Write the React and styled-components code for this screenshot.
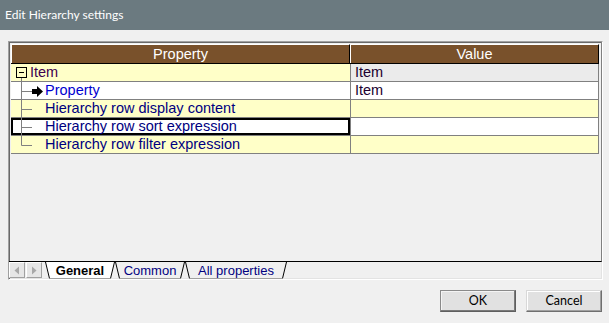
import React from "react";
import styled, { createGlobalStyle } from "styled-components";

const Global = createGlobalStyle`
  html, body { margin: 0; padding: 0; background: #f0f0f0; }
  body { width: 609px; height: 323px; overflow: hidden; }
  #root { width: 609px; height: 323px; }
`;

const Window = styled.div`
  width: 609px;
  height: 323px;
  display: flex;
  flex-direction: column;
  background: #f0f0f0;
  font-family: Lato, "Noto Sans", sans-serif;
`;

const TitleBar = styled.div`
  height: 30px;
  flex: none;
  display: flex;
  align-items: center;
  padding-left: 5px;
  background: #6b7a80;
  color: #ffffff;
  font-family: Lato, "Noto Sans", sans-serif;
  font-size: 12px;
  box-sizing: border-box;
  padding-bottom: 1px;
`;

const Content = styled.div`
  padding: 11px 6px 0 8px;
  display: flex;
  flex-direction: column;
`;

const Frame = styled.div`
  width: 595px;
  height: 239px;
  box-sizing: border-box;
  border: 1px solid;
  border-color: #a0a0a0 #ffffff #ffffff #a0a0a0;
  box-shadow: inset 1px 1px 0 #696969, inset -1px -1px 0 #e3e3e3;
  display: flex;
  flex-direction: column;
`;

const Sheet = styled.div`
  height: 220px;
  box-sizing: border-box;
  padding: 2px 2px 0 2px;
  border-right: 1px solid #808080;
  border-bottom: 1px solid #000000;
  display: flex;
  flex-direction: column;
  font-family: "Liberation Sans", Arial, sans-serif;
  font-size: 14.5px;
`;

const HeaderRow = styled.div`
  display: grid;
  grid-template-columns: 339px 249px;
  height: 19px;
  border-bottom: 1px solid #000;
  box-sizing: content-box;
`;

const HeaderCell = styled.div`
  box-sizing: border-box;
  height: 19px;
  background: #79512b;
  color: #ffffff;
  border-top: 1px solid #ffffff;
  border-left: 1px solid #ffffff;
  border-right: 1px solid #000000;
  display: flex;
  align-items: center;
  justify-content: center;
  line-height: 17px;
`;

const Row = styled.div`
  display: grid;
  grid-template-columns: 340px 248px;
  height: 18px;
`;

const Cell = styled.div`
  box-sizing: border-box;
  height: 18px;
  border-right: 1px solid #808080;
  border-bottom: 1px solid #808080;
  background: ${(p) => p.$bg};
  color: ${(p) => p.$color || "#000"};
  display: flex;
  align-items: center;
  padding-left: ${(p) => p.$pad || 0}px;
  line-height: 17px;
  white-space: nowrap;
  box-shadow: ${(p) => (p.$selected ? "inset 0 0 0 2px #000" : "none")};
`;

const Gutter = styled.svg`
  flex: none;
  display: block;
`;

const Label = styled.span`
  display: block;
`;

const TabBar = styled.div`
  height: 17px;
  display: flex;
  align-items: stretch;
  font-family: "Liberation Sans", Arial, sans-serif;
  font-size: 13px;
`;

const ScrollBtns = styled.div`
  display: flex;
  width: 35px;
  flex: none;
`;

const ScrollBtn = styled.div`
  width: 16px;
  height: 16px;
  box-sizing: border-box;
  border: 1px solid;
  border-color: #ffffff #a0a0a0 #a0a0a0 #ffffff;
  background: #e6e6e6;
  display: flex;
  align-items: center;
  justify-content: center;
  margin-right: 1px;
`;

const Tabs = styled.div`
  display: flex;
  margin-left: 1px;
`;

const Tab = styled.div`
  position: relative;
  width: ${(p) => p.$w}px;
  height: 17px;
  display: flex;
  align-items: center;
  justify-content: center;
  color: ${(p) => (p.$active ? "#000" : "#000080")};
  font-weight: ${(p) => (p.$active ? 700 : 400)};
  line-height: 15px;
`;

const TabShape = styled.svg`
  position: absolute;
  left: 0;
  top: 0;
`;

const TabLabel = styled.span`
  position: relative;
  margin-top: -1px;
`;

const Footer = styled.div`
  display: flex;
  justify-content: flex-end;
  gap: 10px;
  padding: 10px 1px 0 0;
`;

const Button = styled.button`
  width: 76px;
  height: 22px;
  box-sizing: border-box;
  padding: 0;
  margin: 0;
  font-family: Lato, "Noto Sans", sans-serif;
  font-size: 12.5px;
  color: #000;
  background: #e1e1e1;
  border: 1px solid;
  border-color: ${(p) =>
    p.$default ? "#8a8a8a #5f5f5f #5f5f5f #8a8a8a" : "#d8d8d8 #6f6f6f #6f6f6f #d8d8d8"};
  box-shadow: ${(p) =>
    p.$default
      ? "inset -1px -1px 0 #7a7a7a, inset 1px 1px 0 #f4f4f4"
      : "inset -1px -1px 0 #a0a0a0, inset 1px 1px 0 #ffffff"};
  line-height: 18px;
`;

const YELLOW = "#ffffc8";

function TreeItem() {
  return (
    <Gutter width="19" height="17" viewBox="0 0 19 17">
      <rect x="5.5" y="3.5" width="10" height="10" fill="none" stroke="#000" />
      <line x1="8" y1="8.5" x2="13" y2="8.5" stroke="#000" />
      <line x1="10.5" y1="14" x2="10.5" y2="17" stroke="#808080" />
    </Gutter>
  );
}

function TreeBranch({ last, arrow }) {
  return (
    <Gutter width="34" height="17" viewBox="0 0 34 17">
      <line x1="10.5" y1="0" x2="10.5" y2={last ? 9.5 : 17} stroke="#808080" />
      <line x1="10.5" y1="9.5" x2="21" y2="9.5" stroke="#808080" />
      {arrow && (
        <path d="M21 7 H26 V4 L32 9.5 L26 15 V12 H21 Z" fill="#000" />
      )}
    </Gutter>
  );
}

function Tri({ dir }) {
  return (
    <svg width="8" height="9" viewBox="0 0 8 9">
      {dir === "left" ? (
        <path d="M6 0.5 L1.5 4.5 L6 8.5 Z" fill="#a8a8a8" />
      ) : (
        <path d="M2 0.5 L6.5 4.5 L2 8.5 Z" fill="#a8a8a8" />
      )}
    </svg>
  );
}

function SheetTab({ w, active, children }) {
  return (
    <Tab $w={w} $active={active}>
      <TabShape width={w} height="17" viewBox={`0 0 ${w} 17`}>
        <polygon
          points={`0,0 ${w},0 ${w - 4},16.5 4,16.5`}
          fill={active ? "#ffffff" : "#f0f0f0"}
        />
        <line x1="0.5" y1="0" x2="4.5" y2="16.5" stroke="#000" />
        <line x1={w - 0.5} y1="0" x2={w - 4.5} y2="16.5" stroke="#000" />
        <line x1="4.5" y1="16.5" x2={w - 4.5} y2="16.5" stroke="#a0a0a0" />
      </TabShape>
      <TabLabel>{children}</TabLabel>
    </Tab>
  );
}

export default function App() {
  return (
    <>
      <Global />
      <Window>
        <TitleBar>Edit Hierarchy settings</TitleBar>
        <Content>
          <Frame>
            <Sheet>
              <HeaderRow>
                <HeaderCell>Property</HeaderCell>
                <HeaderCell>Value</HeaderCell>
              </HeaderRow>
              <Row>
                <Cell $bg={YELLOW} $color="#400050">
                  <TreeItem />
                  <Label>Item</Label>
                </Cell>
                <Cell $bg="#ebebeb" $color="#200030" $pad={4}>
                  Item
                </Cell>
              </Row>
              <Row>
                <Cell $bg="#ffffff" $color="#0000d0">
                  <TreeBranch arrow />
                  <Label>Property</Label>
                </Cell>
                <Cell $bg="#ffffff" $color="#200030" $pad={4}>
                  Item
                </Cell>
              </Row>
              <Row>
                <Cell $bg={YELLOW} $color="#000080">
                  <TreeBranch />
                  <Label>Hierarchy row display content</Label>
                </Cell>
                <Cell $bg={YELLOW} />
              </Row>
              <Row>
                <Cell $bg="#ffffff" $color="#000080" $selected>
                  <TreeBranch />
                  <Label>Hierarchy row sort expression</Label>
                </Cell>
                <Cell $bg="#ffffff" />
              </Row>
              <Row>
                <Cell $bg={YELLOW} $color="#000080">
                  <TreeBranch last />
                  <Label>Hierarchy row filter expression</Label>
                </Cell>
                <Cell $bg={YELLOW} />
              </Row>
            </Sheet>
            <TabBar>
              <ScrollBtns>
                <ScrollBtn>
                  <Tri dir="left" />
                </ScrollBtn>
                <ScrollBtn>
                  <Tri dir="right" />
                </ScrollBtn>
              </ScrollBtns>
              <Tabs>
                <SheetTab w={70} active>
                  General
                </SheetTab>
                <SheetTab w={70}>Common</SheetTab>
                <SheetTab w={102}>All properties</SheetTab>
              </Tabs>
            </TabBar>
          </Frame>
          <Footer>
            <Button $default>OK</Button>
            <Button>Cancel</Button>
          </Footer>
        </Content>
      </Window>
    </>
  );
}
